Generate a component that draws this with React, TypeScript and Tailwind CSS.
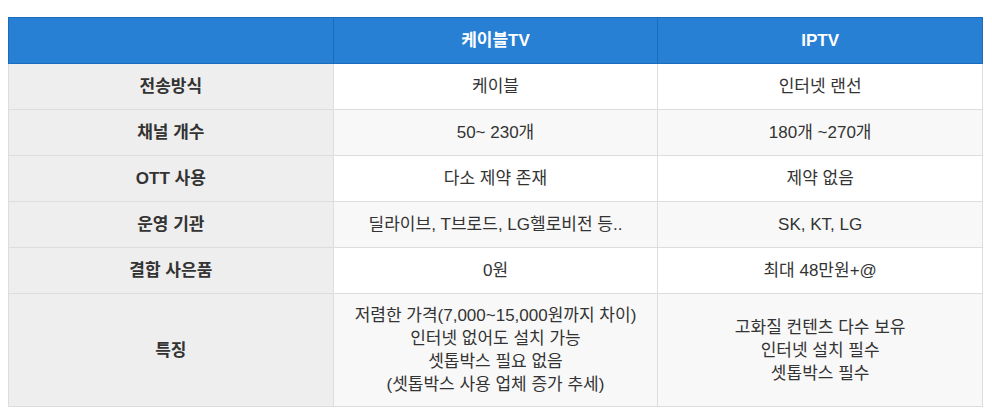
import React from "react";

const rows: { label: string; a: string[]; b: string[] }[] = [
  { label: "전송방식", a: ["케이블"], b: ["인터넷 랜선"] },
  { label: "채널 개수", a: ["50~ 230개"], b: ["180개 ~270개"] },
  { label: "OTT 사용", a: ["다소 제약 존재"], b: ["제약 없음"] },
  { label: "운영 기관", a: ["딜라이브, T브로드, LG헬로비전 등.."], b: ["SK, KT, LG"] },
  { label: "결합 사은품", a: ["0원"], b: ["최대 48만원+@"] },
  {
    label: "특징",
    a: [
      "저렴한 가격(7,000~15,000원까지 차이)",
      "인터넷 없어도 설치 가능",
      "셋톱박스 필요 없음",
      "(셋톱박스 사용 업체 증가 추세)",
    ],
    b: ["고화질 컨텐츠 다수 보유", "인터넷 설치 필수", "셋톱박스 필수"],
  },
];

export default function App() {
  return (
    <div
      className="w-[992px] h-[418px] bg-white pt-[17px] pl-2"
      style={{ fontFamily: '"Liberation Sans", "Noto Sans CJK KR", sans-serif' }}
    >
      <table className="w-[975px] table-fixed border-collapse text-[17px] leading-[23px] text-[#333]">
        <thead>
          <tr className="bg-[#2780d4] text-white">
            <th className="h-[46px] border border-[#1b6cbc] font-bold"></th>
            <th className="h-[46px] border border-[#1b6cbc] font-bold">케이블TV</th>
            <th className="h-[46px] border border-[#1b6cbc] font-bold">IPTV</th>
          </tr>
        </thead>
        <tbody>
          {rows.map((r, i) => (
            <tr key={r.label} className={i % 2 === 1 ? "bg-[#f8f8f8]" : "bg-white"}>
              <td className="h-[46px] border border-[#dddddd] bg-[#eeeeee] py-[10px] text-center font-bold">
                {r.label}
              </td>
              <td className="h-[46px] border border-[#dddddd] py-[10px] text-center">
                {r.a.map((l) => (
                  <div key={l}>{l}</div>
                ))}
              </td>
              <td className="h-[46px] border border-[#dddddd] py-[10px] text-center">
                {r.b.map((l) => (
                  <div key={l}>{l}</div>
                ))}
              </td>
            </tr>
          ))}
        </tbody>
      </table>
    </div>
  );
}
